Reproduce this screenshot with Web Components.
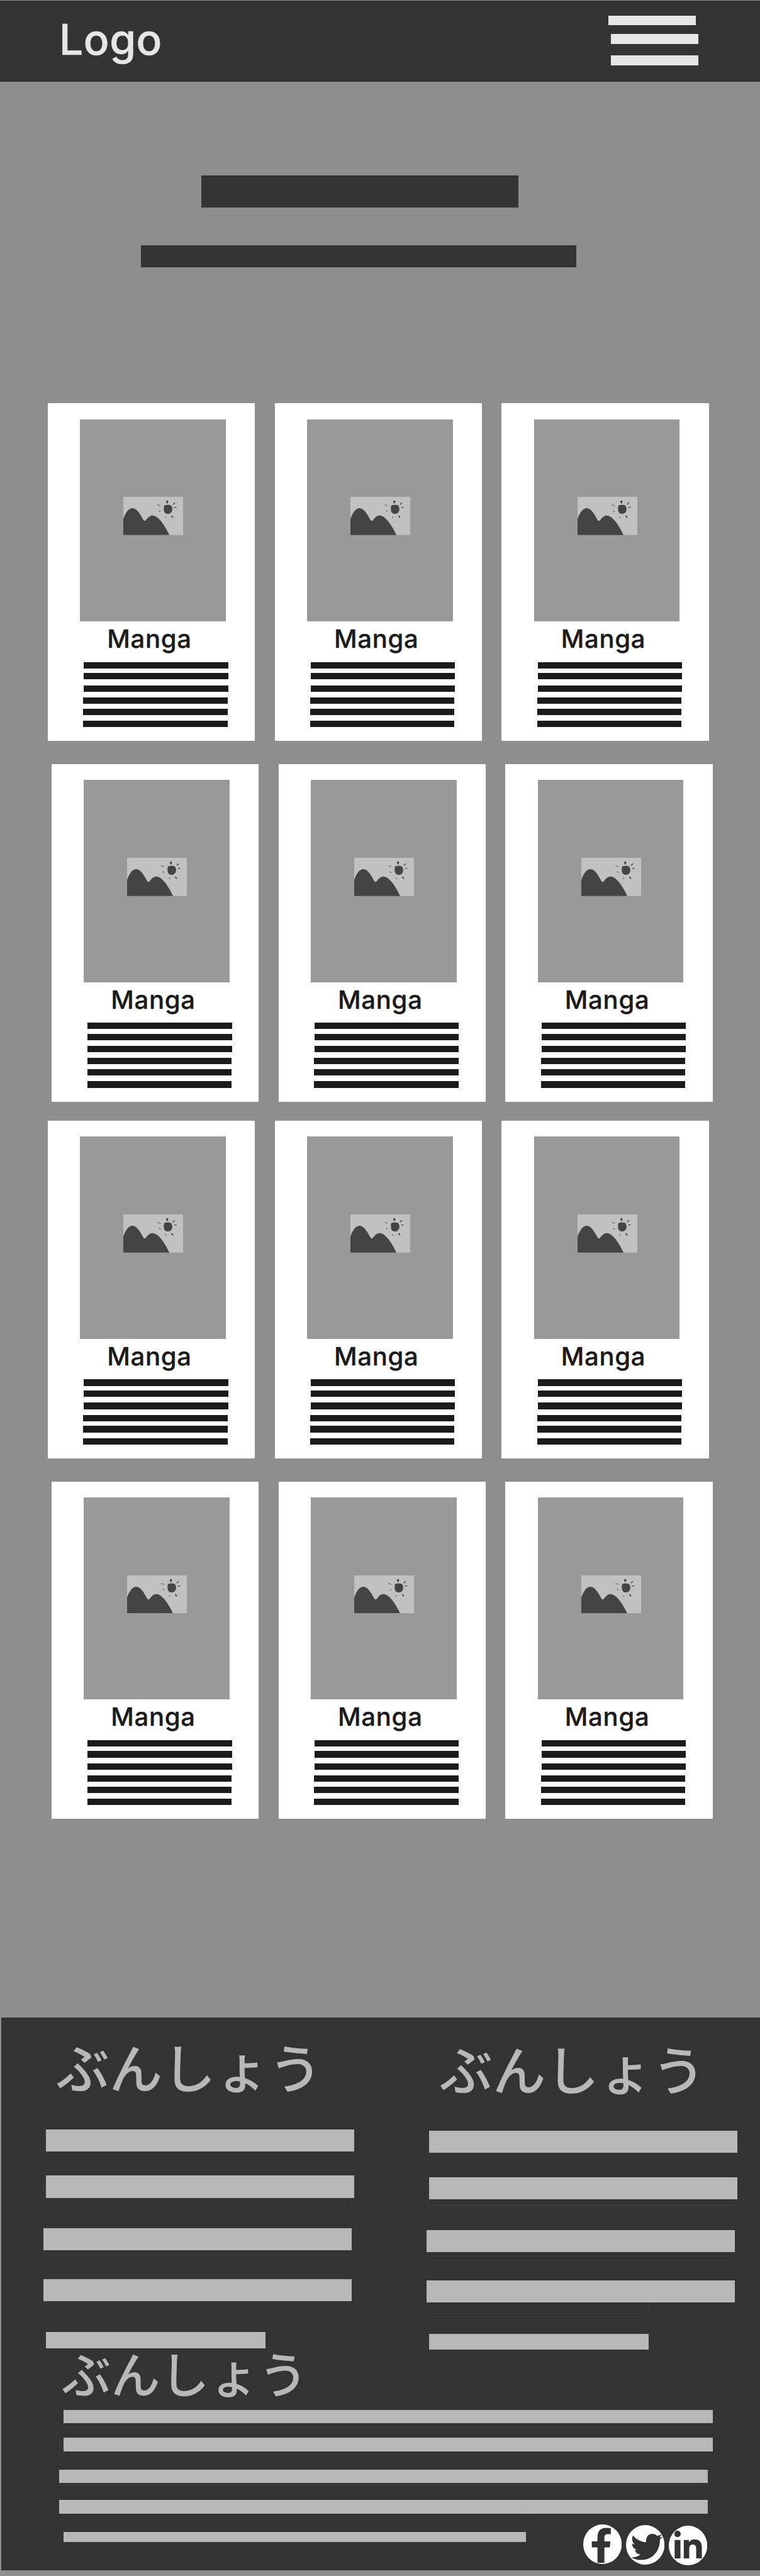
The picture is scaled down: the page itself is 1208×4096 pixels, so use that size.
<!DOCTYPE html>
<html lang="ja">
<head>
<meta charset="utf-8">
<title>Manga</title>
<style>
  /* 1rem = 100 design units */
  html { font-size: 87.15px; background: #8e8e8e; }
  body { margin: 0; font-family: Inter, "Noto Sans CJK JP", sans-serif; }
</style>
</head>
<body>
<manga-page></manga-page>

<script>
const define = (name, html, setup) => {
  const tpl = document.createElement('template');
  tpl.innerHTML = html;
  customElements.define(name, class extends HTMLElement {
    constructor() {
      super();
      this.attachShadow({ mode: 'open' }).append(tpl.content.cloneNode(true));
    }
    connectedCallback() {
      if (setup) setup(this);
    }
  });
};

/* Placeholder bar. x, w, h and gap (space above) are in design units;
   trace="x y w h" adds a faint outline behind the bar. */
define('wire-bar', `
  <style>
    :host { display: block; position: relative; flex: none; background: var(--bar, #b8b8b8); }
    i { position: absolute; z-index: -1; box-sizing: border-box; border: 1px solid #3c3c3c; }
  </style>`, el => {
  const r = v => v / 100 + 'rem';
  const n = a => Number(el.getAttribute(a) || 0);
  el.style.marginLeft = r(n('x'));
  el.style.marginTop = r(n('gap'));
  el.style.width = r(n('w'));
  el.style.height = r(n('h'));
  const trace = el.getAttribute('trace');
  if (trace) {
    const [x, y, w, h] = trace.split(' ').map(r);
    const i = document.createElement('i');
    Object.assign(i.style, { left: x, top: y, width: w, height: h });
    el.shadowRoot.append(i);
  }
});

define('site-header', `
  <style>
    :host { display: flex; justify-content: space-between; align-items: flex-start; box-sizing: border-box;
      isolation: isolate; height: 1.482rem; margin-top: .015rem; padding: .267rem 1.13rem 0 1.08rem; background: #333; --bar: #e6e6e6; }
    .logo { font-size: .775rem; line-height: 1; font-weight: 500; -webkit-text-stroke: .6px; color: #e6e6e6; margin-top: .05rem; letter-spacing: .006rem; }
    nav { display: flex; flex-direction: column; width: 1.63rem; }
  </style>
  <div class="logo"><slot></slot></div>
  <nav>
    <wire-bar w="159" h="18"></wire-bar>
    <wire-bar x="4.5" gap="16" w="159" h="18" trace="-4.5 5 159 18"></wire-bar>
    <wire-bar x="4.5" gap="21" w="159" h="18"></wire-bar>
  </nav>`);

define('picture-icon', `
  <style>:host { display: block; width: 1.09rem; height: .698rem; } svg { display: block; width: 100%; height: 100%; }</style>
  <svg viewBox="75 51 327 209" preserveAspectRatio="none" fill="#444">
    <path fill="#c1c1c1" d="M75 51h327v209H75z"/>
    <path d="M75 172C88 135 105 113 125 113C150 113 169 149 183 175Q190 188 198 179C211 162 221 153 235 153C266 153 301 205 327 260H75Z"/>
    <path d="M299 98C307 94 329 93 336 98C342 105 344 114 343 122C340 137 330 144 319 144C305 144 297 134 297 122C296 110 296 104 299 98Z"/>
    <path d="M309 74Q315 68 321 74Q321 82 317 87H313Q309 82 309 74ZM344 95Q347 84 359 80Q357 91 344 95ZM350 110Q359 104 369 108Q360 113 350 110ZM258 93Q272 94 282 101Q268 101 258 93ZM268 126Q275 126 280 131Q272 133 268 126ZM303 160Q307 160 310 164L307 168Q304 165 303 160ZM336 154Q342 151 346 158L349 167Q339 165 336 154Z"/>
  </svg>`);

define('manga-card', `
  <style>
    :host { display: flex; flex-direction: column; box-sizing: border-box; width: 3.777rem; height: 6.16rem;
      padding-top: .288rem; background: #fff; --bar: #1b1b1b; }
    .cover { display: flex; box-sizing: border-box; width: 2.657rem; height: 3.691rem; margin-left: .59rem;
      padding: 1.421rem 0 0 .79rem; background: #999; }
    .title { font-size: .46rem; line-height: 1; font-weight: 500; -webkit-text-stroke: .35px; color: #1b1b1b; letter-spacing: .008rem; margin: .091rem 0 0 1.083rem; }
    .under { box-shadow: 0 1px #fff, 0 2px #ededed; }
  </style>
  <div class="cover"><picture-icon></picture-icon></div>
  <div class="title"><slot></slot></div>
  <wire-bar x="66" gap="18.8" w="263" h="11.8"></wire-bar>
  <wire-bar class="under" x="66" gap="8.4" w="263" h="11.8"></wire-bar>
  <wire-bar x="66" gap="10.5" w="263" h="11.8"></wire-bar>
  <wire-bar x="65" gap="10.2" w="263" h="11.8"></wire-bar>
  <wire-bar class="under" x="65" gap="8.8" w="263" h="11.8"></wire-bar>
  <wire-bar x="65" gap="10.2" w="263" h="11.8"></wire-bar>`);

define('card-row', `
  <style>
    :host { display: flex; gap: .363rem; margin-left: .87rem; }
    :host([shifted]) { margin-left: .94rem; }
  </style>
  <manga-card>Manga</manga-card><manga-card>Manga</manga-card><manga-card>Manga</manga-card>`);

define('footer-text', `
  <style>
    :host { display: flex; flex-direction: column; align-items: flex-start; }
    h2 { margin: 0 0 0 var(--hx, 1.005rem); font: 500 var(--fs, .97rem)/1 "Noto Sans CJK JP", sans-serif; color: #b8b8b8; white-space: nowrap; }
  </style>
  <h2>ぶんしょう</h2><slot></slot>`);

define('social-icons', `
  <style>
    :host { display: flex; }
    svg { display: block; width: .703rem; height: .723rem; flex: none; fill: #333; }
    svg + svg { margin: .01rem 0 0 .077rem; }
    svg + svg + svg { margin: .017rem 0 0 .084rem; }
    ellipse { fill: #fff; }
  </style>
  <svg viewBox="40 18 211 217"><ellipse cx="145.5" cy="126.5" rx="105.5" ry="108.5"/>
    <path d="M118 228V144H87V111H118V88C118 55 134 37 164 37C175 37 185 38 191 39V71H174C160 71 156 78 156 89V111H189L185 144H156V228Z"/></svg>
  <svg viewBox="274 21 211 217"><ellipse cx="379.5" cy="129.5" rx="105.5" ry="108.5"/>
    <path d="M312 78C330 100 355 113 384 115C381 84 399 69 418 69C429 69 438 73 444 80Q456 78 468 73Q464 83 456 89Q465 88 474 85Q468 94 460 99C461 165 418 212 358 212C337 212 318 207 302 198C322 199 340 193 353 182C338 181 327 172 322 158H335C318 152 308 140 307 123Q314 127 322 127C309 116 303 98 312 78Z"/></svg>
  <svg viewBox="510 23 211 217"><ellipse cx="615.5" cy="131.5" rx="105.5" ry="108.5"/>
    <circle cx="558" cy="68" r="17.5"/>
    <path d="M542 101H574V202H542ZM592 101H620V114C628 102 640 98 652 98C680 98 691 115 691 144V202H660V150C660 134 655 126 642 126C628 126 622 135 622 150V202H592Z"/></svg>`);

define('site-footer', `
  <style>
    :host { display: block; isolation: isolate; box-sizing: border-box; margin-left: .02rem; height: 10.092rem; padding-top: .398rem; background: #333; }
    .cols { display: flex; height: 5.629rem; }
    .cols footer-text { width: 6.99rem; flex: none; }
    .cols footer-text + footer-text { padding-top: .027rem; }
    .wide { --hx: 1.105rem; --fs: .898rem; }
    .last { display: flex; align-items: flex-start; margin-top: .2rem; }
    social-icons { margin-left: 1.036rem; }
  </style>
  <div class="cols">
    ${`<footer-text>
      <wire-bar x="81.5" gap="67.5" w="562" h="40.3"></wire-bar>
      <wire-bar x="81.5" gap="44.2" w="562" h="40.3" trace="-4 11.5 562 40.5"></wire-bar>
      <wire-bar x="77.5" gap="56" w="562" h="40.3" trace="0 8 562 40.5"></wire-bar>
      <wire-bar x="77.5" gap="51.8" w="562" h="40.3" trace="4 28 401 38.5"></wire-bar>
      <wire-bar x="81.5" gap="57" w="401" h="29"></wire-bar>
    </footer-text>`.repeat(2)}
  </div>
  <footer-text class="wide">
    <wire-bar x="113.7" gap="23.5" w="1184" h="24.8"></wire-bar>
    <wire-bar x="113.7" gap="26" w="1184" h="24.8" trace="-8.3 6.5 1183.5 25"></wire-bar>
    <wire-bar x="105.5" gap="33.2" w="1183.5" h="24.8" trace="0 4 1183.5 25"></wire-bar>
    <wire-bar x="105.5" gap="30.8" w="1183.5" h="24.8" trace="8 15 844 25"></wire-bar>
    <div class="last">
      <wire-bar x="113.7" gap="14" w="844" h="18"></wire-bar>
      <social-icons></social-icons>
    </div>
  </footer-text>`);

define('manga-page', `
  <style>
    :host { display: flow-root; height: 4096px; overflow: hidden; background: #8e8e8e; }
    .hero { display: flex; flex-direction: column; height: 5.863rem; --bar: #333; }
    .grid { display: flex; flex-direction: column; height: 29.448rem; }
    .grid card-row:nth-child(2), .grid card-row:nth-child(4) { margin-top: .42rem; }
    .grid card-row:nth-child(3) { margin-top: .35rem; }
  </style>
  <site-header>Logo</site-header>
  <div class="hero">
    <wire-bar x="366.8" gap="170.5" w="579.2" h="58"></wire-bar>
    <wire-bar x="257.2" gap="69" w="793.3" h="41"></wire-bar>
  </div>
  <div class="grid">
    <card-row></card-row><card-row shifted></card-row><card-row></card-row><card-row shifted></card-row>
  </div>
  <site-footer></site-footer>`);
</script>
</body>
</html>
